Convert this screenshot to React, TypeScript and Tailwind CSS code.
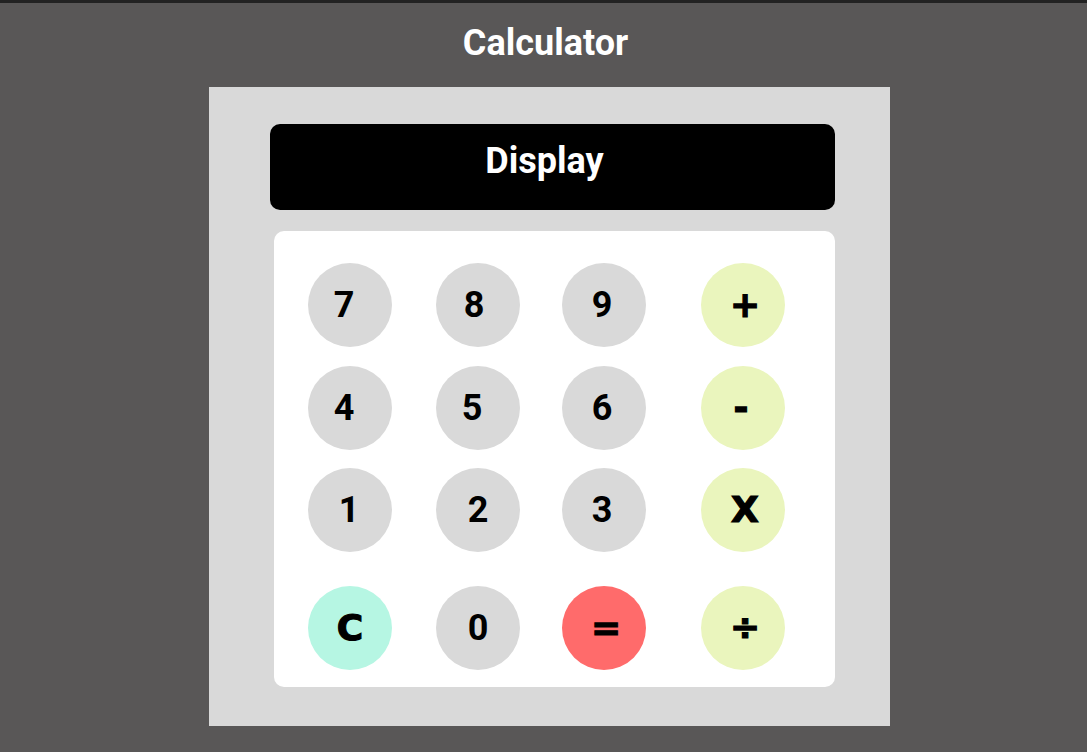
type Key = { label: string; tone: "num" | "op" | "clear" | "equals"; nudge: string };

// nudge = small horizontal offset of the glyph inside its circle, as in the mockup
const keys: Key[] = [
  { label: "7", tone: "num", nudge: "pr-[12px]" },
  { label: "8", tone: "num", nudge: "pr-[8px]" },
  { label: "9", tone: "num", nudge: "pr-[4px]" },
  { label: "+", tone: "op", nudge: "pl-[4px]" },
  { label: "4", tone: "num", nudge: "pr-[12px]" },
  { label: "5", tone: "num", nudge: "pr-[12px]" },
  { label: "6", tone: "num", nudge: "pr-[4px]" },
  { label: "-", tone: "op", nudge: "pr-[4px]" },
  { label: "1", tone: "num", nudge: "pr-[2px]" },
  { label: "2", tone: "num", nudge: "" },
  { label: "3", tone: "num", nudge: "pr-[4px]" },
  { label: "X", tone: "op", nudge: "pl-[4px]" },
  { label: "C", tone: "clear", nudge: "" },
  { label: "0", tone: "num", nudge: "" },
  { label: "=", tone: "equals", nudge: "pl-[4px]" },
  { label: "÷", tone: "op", nudge: "pl-[4px]" },
];

const heavy = "font-bold font-['DejaVu_Sans',sans-serif] [-webkit-text-stroke:1.2px_#000]";

const toneClass: Record<Key["tone"], string> = {
  num: "bg-[#d9d9d9] font-bold",
  op: `bg-[#eaf5bd] ${heavy}`,
  clear: `bg-[#b6f6e3] ${heavy}`,
  equals: `bg-[#ff6b6b] ${heavy}`,
};

export default function App() {
  return (
    <div
      className="min-h-[752px] bg-[#595757] border-t-[3px] border-[#222222]"
      style={{ fontFamily: "Roboto, 'Liberation Sans', sans-serif" }}
    >
      {/* Title */}
      <h1 className="pt-[19px] pl-[4px] text-center text-[36px] leading-[42px] font-bold text-white">
        Calculator
      </h1>

      {/* Calculator body */}
      <div className="mt-[23px] ml-[209px] w-[681px] bg-[#d9d9d9] pt-[37px] pb-[39px] pl-[61px]">
        <div className="w-[565px] h-[86px] rounded-[10px] bg-black pt-[16px] pr-[16px] text-center text-[36px] leading-[42px] font-bold text-white">
          Display
        </div>

        <div className="mt-[21px] ml-[4px] w-[561px] h-[456px] rounded-[10px] bg-white pt-[32px] pl-[34px]">
          <div className="grid grid-cols-[128px_126px_139px_84px] grid-rows-[103px_102px_118px_84px]">
            {keys.map((k) => (
              <div key={k.label}>
                <button
                  className={`flex h-[84px] w-[84px] items-center justify-center rounded-full text-[36px] leading-[42px] text-black ${toneClass[k.tone]} ${k.nudge}`}
                >
                  {k.label}
                </button>
              </div>
            ))}
          </div>
        </div>
      </div>
    </div>
  );
}
